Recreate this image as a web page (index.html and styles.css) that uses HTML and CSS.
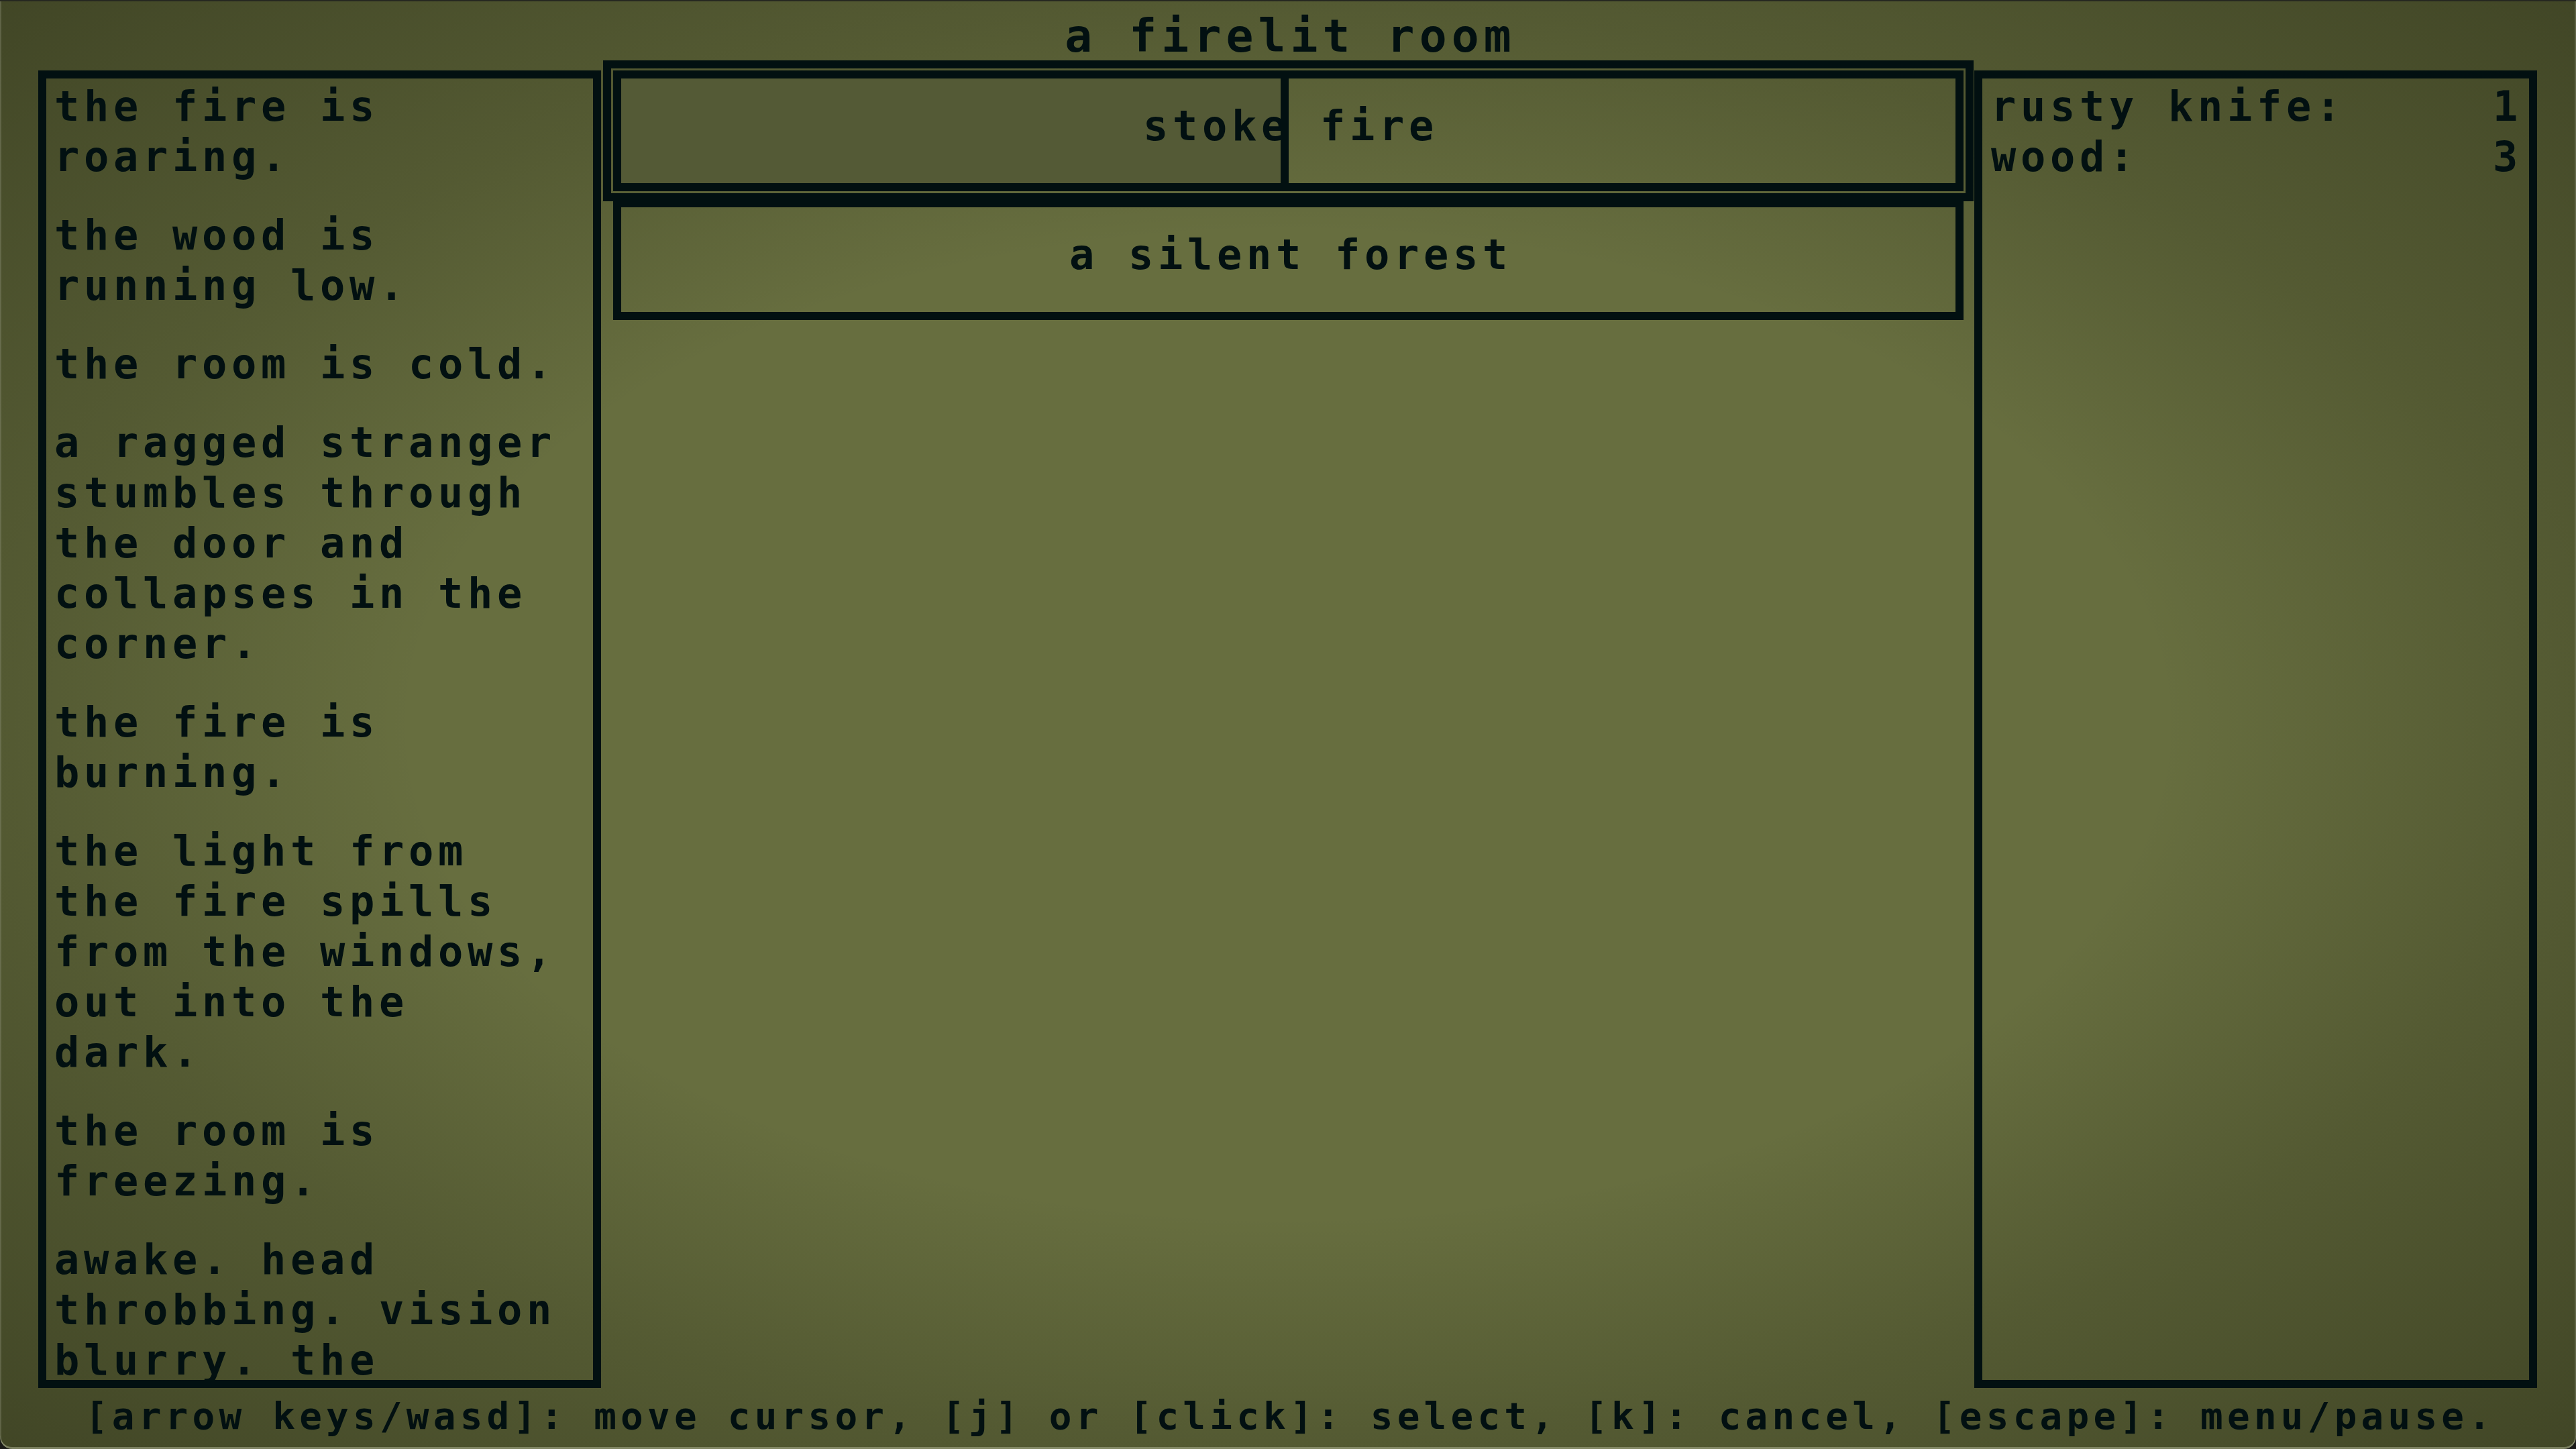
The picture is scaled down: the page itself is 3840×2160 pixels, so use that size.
FILE: index.html
```html
<!DOCTYPE html>
<html lang="en">
<head>
<meta charset="utf-8">
<title>a firelit room</title>
<link rel="stylesheet" href="styles.css">
</head>
<body>
<div class="screen">
  <div class="title">a firelit room</div>
  <div class="main">
    <div class="panel log">
      <p>the fire is roaring.</p>
      <p>the wood is running low.</p>
      <p>the room is cold.</p>
      <p>a ragged stranger stumbles through the door and collapses in the corner.</p>
      <p>the fire is burning.</p>
      <p>the light from the fire spills from the windows, out into the dark.</p>
      <p>the room is freezing.</p>
      <p>awake. head throbbing. vision blurry. the darkness presses in close.</p>
    </div>
    <div class="center">
      <div class="btn focused">
        <div class="cooldown" style="width:50%"></div>
        <span class="label">stoke fire</span>
      </div>
      <div class="btn">
        <span class="label">a silent forest</span>
      </div>
    </div>
    <div class="panel stores">
      <div class="row"><span>rusty knife:</span><span>1</span></div>
      <div class="row"><span>wood:</span><span>3</span></div>
    </div>
  </div>
  <div class="footer">[arrow keys/wasd]: move cursor, [j] or [click]: select, [k]: cancel, [escape]: menu/pause.</div>
</div>
</body>
</html>
```

FILE: styles.css
```css
html, body {
  margin: 0;
  padding: 0;
  background: #1b1b19;
}

.screen {
  width: 3840px;
  height: 2160px;
  box-sizing: border-box;
  display: flex;
  flex-direction: column;
  overflow: hidden;
  border-radius: 0 0 18px 18px;
  color: #021011;
  font-family: "DejaVu Sans Mono", "Liberation Mono", monospace;
  font-weight: bold;
  font-size: 62px;
  letter-spacing: 6.67px;
  line-height: 75px;
  background:
    radial-gradient(ellipse farthest-corner at 50% 50%, rgba(0, 0, 0, 0) 48%, rgba(8, 10, 0, 0.2) 70%, rgba(8, 10, 0, 0.4) 100%),
    #676e3f;
  box-shadow:
    inset 0 2px 0 #262820,
    inset 0 -3px 0 rgba(190, 195, 165, 0.45),
    inset 2px 0 0 rgba(150, 152, 130, 0.35),
    inset -2px 0 0 rgba(150, 152, 130, 0.35);
}

.title {
  height: 105px;
  box-sizing: border-box;
  padding-top: 13.5px;
  padding-left: 7px;
  text-align: center;
  font-size: 68px;
  letter-spacing: 7.1px;
  line-height: 80px;
  white-space: nowrap;
}

.main {
  height: 1964px;
  flex: none;
  display: grid;
  grid-template-columns: 839px 1fr 839px;
  padding: 0 58px 0 57px;
}

.panel {
  border: 12px solid #021011;
  overflow: hidden;
  box-sizing: border-box;
  min-height: 0;
}

.log {
  padding: 4px 33px 0 12px;
}

.log p {
  margin: 0 0 42px;
}

.stores {
  padding: 4px 10px 0 13px;
}

.row {
  display: flex;
  justify-content: space-between;
  white-space: nowrap;
}

.center {
  display: flex;
  flex-direction: column;
  gap: 12px;
  padding: 0 16px 0 18px;
}

.btn {
  position: relative;
  isolation: isolate;
  height: 180px;
  box-sizing: border-box;
  border: 12px solid #021011;
  display: flex;
  align-items: center;
  justify-content: center;
  padding: 0 0 16px 7px;
  white-space: nowrap;
}

.btn.focused {
  outline: 12px solid #021011;
  outline-offset: 3px;
}

.cooldown {
  position: absolute;
  left: 0;
  top: 0;
  bottom: 0;
  background: #545a36;
}

.cooldown::after {
  content: "";
  position: absolute;
  right: 0;
  top: 0;
  bottom: 0;
  width: 12px;
  background: #021011;
  z-index: 1;
}

.label {
  position: relative;
}

.footer {
  flex: 1;
  padding-top: 8.6px;
  padding-left: 6px;
  text-align: center;
  font-size: 56px;
  letter-spacing: 6.2px;
  line-height: 66px;
  white-space: nowrap;
}
```
